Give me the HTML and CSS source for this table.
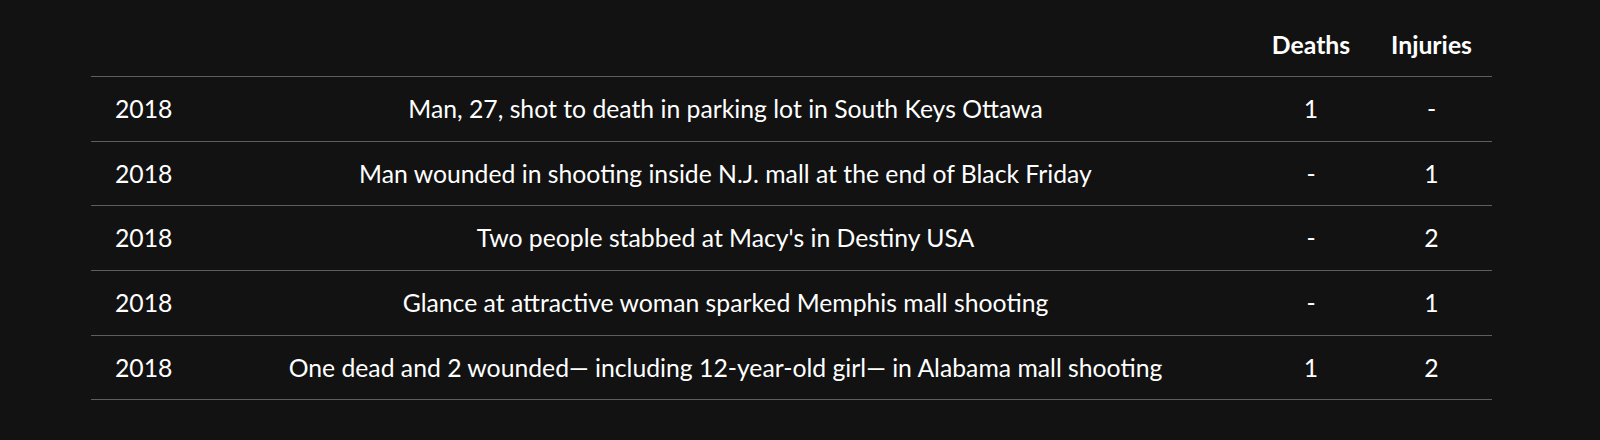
FILE: index.html
```html
<!DOCTYPE html>
<html lang="en">
<head>
<meta charset="utf-8">
<title>Incidents</title>
<link rel="stylesheet" href="styles.css">
</head>
<body>
<div class="wrap">
<table class="incidents">
  <thead>
    <tr>
      <th class="c-year"></th>
      <th class="c-title"></th>
      <th class="c-num">Deaths</th>
      <th class="c-num c-last">Injuries</th>
    </tr>
  </thead>
  <tbody>
    <tr><td class="c-year">2018</td><td class="c-title">Man, 27, shot to death in parking lot in South Keys Ottawa</td><td class="c-num">1</td><td class="c-num c-last">-</td></tr>
    <tr><td class="c-year">2018</td><td class="c-title">Man wounded in shooting inside N.J. mall at the end of Black Friday</td><td class="c-num">-</td><td class="c-num c-last">1</td></tr>
    <tr><td class="c-year">2018</td><td class="c-title">Two people stabbed at Macy's in Destiny USA</td><td class="c-num">-</td><td class="c-num c-last">2</td></tr>
    <tr><td class="c-year">2018</td><td class="c-title">Glance at attractive woman sparked Memphis mall shooting</td><td class="c-num">-</td><td class="c-num c-last">1</td></tr>
    <tr><td class="c-year">2018</td><td class="c-title">One dead and 2 wounded— including 12-year-old girl— in Alabama mall shooting</td><td class="c-num">1</td><td class="c-num c-last">2</td></tr>
  </tbody>
</table>
</div>
</body>
</html>
```
FILE: styles.css
```css
html, body {
  margin: 0;
  padding: 0;
  background: #121212;
}
body {
  color: #ffffff;
  font-family: "Lato", "Open Sans", sans-serif;
  font-size: 24.75px;
}
.wrap {
  padding-left: 91px;
  width: 1401px;
}
.incidents {
  width: 100%;
  border-collapse: collapse;
}
.incidents th {
  font-weight: 700;
  height: 60px;
  padding: 0 20px 16px;
  vertical-align: bottom;
  line-height: 30px;
  border-bottom: 1px solid #5e5e5e;
}
.incidents td {
  height: 63.7px;
  padding: 0 20px;
  line-height: 30px;
  border-bottom: 1px solid #5e5e5e;
}
.c-year {
  width: 65px;
  text-align: left;
  padding-left: 24px !important;
}
.c-title {
  text-align: center;
}
.c-num {
  width: 80px;
  text-align: center;
}
```
